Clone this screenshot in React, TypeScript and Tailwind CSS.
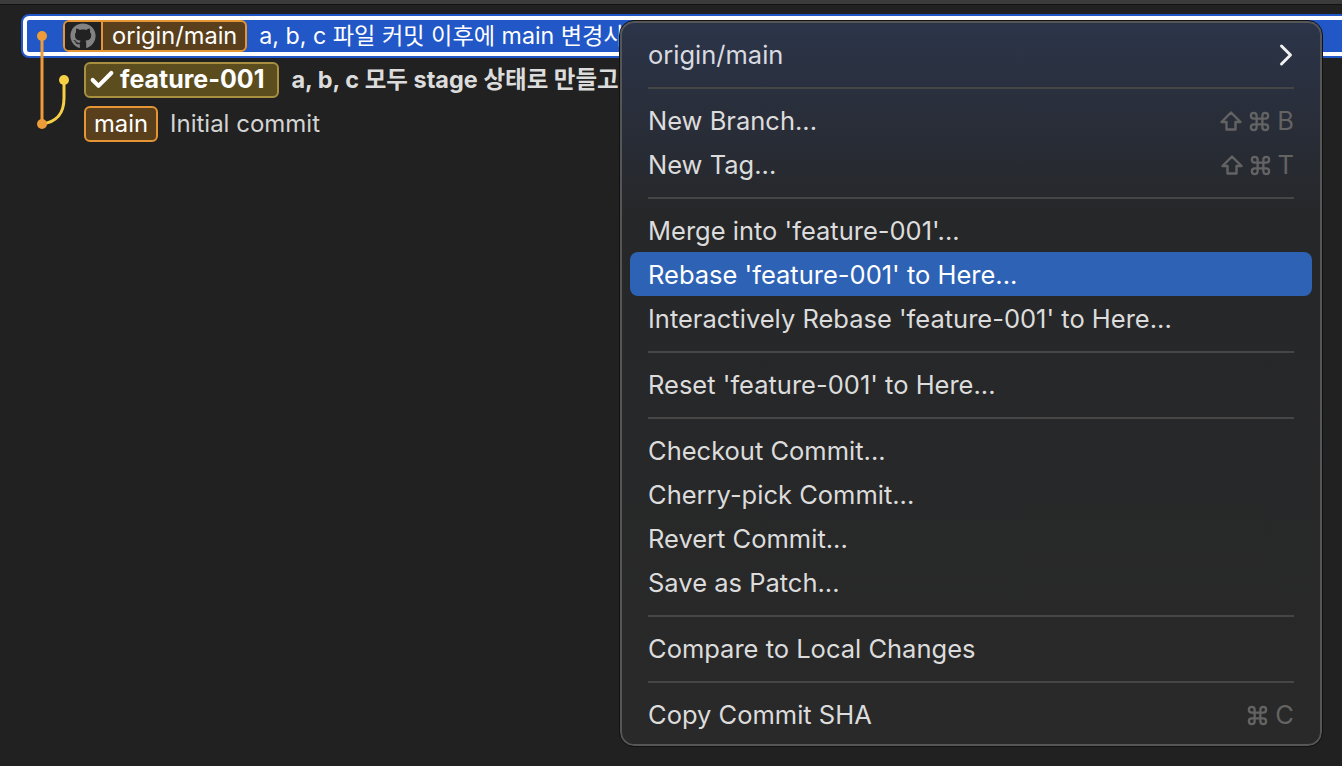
import { Check, ChevronRight, Command } from "lucide-react";
import { FaGithub } from "react-icons/fa";

type MenuRow = { label: string; keys?: string[]; active?: boolean };

const menuGroups: MenuRow[][] = [
  [{ label: "New Branch...", keys: ["shift", "cmd", "B"] }, { label: "New Tag...", keys: ["shift", "cmd", "T"] }],
  [
    { label: "Merge into 'feature-001'..." },
    { label: "Rebase 'feature-001' to Here...", active: true },
    { label: "Interactively Rebase 'feature-001' to Here..." },
  ],
  [{ label: "Reset 'feature-001' to Here..." }],
  [
    { label: "Checkout Commit..." },
    { label: "Cherry-pick Commit..." },
    { label: "Revert Commit..." },
    { label: "Save as Patch..." },
  ],
  [{ label: "Compare to Local Changes" }],
  [{ label: "Copy Commit SHA", keys: ["cmd", "C"] }],
];

function Separator() {
  return <div className="mx-[18px] my-[10px] h-[2px] bg-[#464646]" />;
}

function ShiftIcon() {
  return (
    <svg width="22" height="20" viewBox="0 0 22 20" fill="none" stroke="currentColor" strokeWidth="2.4" strokeLinejoin="round">
      <path d="M11 1.5 L20.5 11 H15.5 V18.5 H6.5 V11 H1.5 Z" />
    </svg>
  );
}

function Shortcut({ keys }: { keys: string[] }) {
  return (
    <div className="ml-auto flex items-center text-[#636363]">
      {keys.map((k) =>
        k === "shift" ? (
          <ShiftIcon key={k} />
        ) : k === "cmd" ? (
          <Command key={k} className="ml-[6px]" size={23} strokeWidth={2.4} />
        ) : (
          <span key={k} className="ml-[6px]">
            {k}
          </span>
        ),
      )}
    </div>
  );
}

function ContextMenu() {
  return (
    <div className="absolute left-[620px] top-[21px] h-[725px] w-[702px] rounded-[14px] border-2 border-[#565656] bg-gradient-to-b from-[#2b3449] via-[#262729] via-27% to-[#292929] px-2 pt-[10px] text-[25.5px] text-[#dcdcdc] outline outline-[#111111]">
      <div className="flex h-[44px] items-center px-[18px] text-[#d8dae0]">
        <span>origin/main</span>
        <ChevronRight className="ml-auto -mr-[10px] text-[#f0f0f0]" size={36} strokeWidth={2} />
      </div>
      {menuGroups.map((group, i) => (
        <div key={i}>
          <Separator />
          {group.map((row) => (
            <div
              key={row.label}
              className={
                row.active
                  ? "-mt-[1px] mb-[1px] flex h-[44px] items-center rounded-[8px] bg-[#2e62b4] px-[18px] pt-[2px] text-white"
                  : "flex h-[44px] items-center px-[18px]"
              }
            >
              <span>{row.label}</span>
              {row.keys && <Shortcut keys={row.keys} />}
            </div>
          ))}
        </div>
      ))}
    </div>
  );
}

function Graph() {
  return (
    <svg className="absolute left-0 top-0" width="90" height="150">
      <path d="M64 80 V98 C64 115 56 122 42 124" fill="none" stroke="#f7cf45" strokeWidth="3" />
      <path d="M42 36 V124" fill="none" stroke="#ee9b3a" strokeWidth="3" />
      <circle cx="42" cy="36" r="5" fill="#ee9b3a" />
      <circle cx="64" cy="80" r="5" fill="#f7cf45" />
      <circle cx="42" cy="124" r="5" fill="#ee9b3a" />
    </svg>
  );
}

export default function App() {
  return (
    <div className="relative h-screen w-screen overflow-hidden bg-[#212121] font-['Inter','Noto_Sans_CJK_KR',sans-serif] text-[24px]">
      <div className="h-[4px] bg-[#3b3b3b]" />
      <div className="h-[1px] bg-[#121212]" />

      <div className="mt-[9px]">
        {/* selected commit */}
        <div className="ml-[21px] flex h-[44px] w-[1340px] items-center rounded-l-[8px] border-2 border-[#2257c8] bg-[#2257c8] pl-[40px] text-white outline-[4px] -outline-offset-[6px] outline-white">
          <div className="flex h-[32px] items-center overflow-hidden rounded-[6px] border-2 border-[#e59533] bg-[#5a3f1c]">
            <div className="flex h-full w-[38px] items-center justify-center border-r-2 border-[#e59533] bg-[#222222]">
              <FaGithub className="text-[#828282]" size={26} />
            </div>
            <span className="pl-[9px] pr-[8px] text-[23.6px]">origin/main</span>
          </div>
          <span className="ml-[12px] text-[23.2px]">a, b, c 파일 커밋 이후에 main 변경사항</span>
        </div>

        <div className="flex h-[44px] items-center pl-[84px] font-bold text-[#dcdcdc]">
          <div className="flex h-[36px] items-center gap-[4px] rounded-[6px] border-2 border-[#a89040] bg-[#5c4d1f] pl-[2px] pr-[13px] text-[25px] text-white">
            <Check size={28} strokeWidth={3.5} />
            <span>feature-001</span>
          </div>
          <span className="ml-[12px] text-[23.5px]">a, b, c 모두 stage 상태로 만들고</span>
        </div>

        <div className="flex h-[44px] items-center pl-[84px] text-[#d4d4d4]">
          <div className="flex h-[36px] items-center rounded-[6px] border-2 border-[#e59533] bg-[#5a3f1c] px-[8px] text-[23.8px] text-white">
            main
          </div>
          <span className="ml-[12px]">Initial commit</span>
        </div>
      </div>

      <Graph />
      <ContextMenu />
    </div>
  );
}
